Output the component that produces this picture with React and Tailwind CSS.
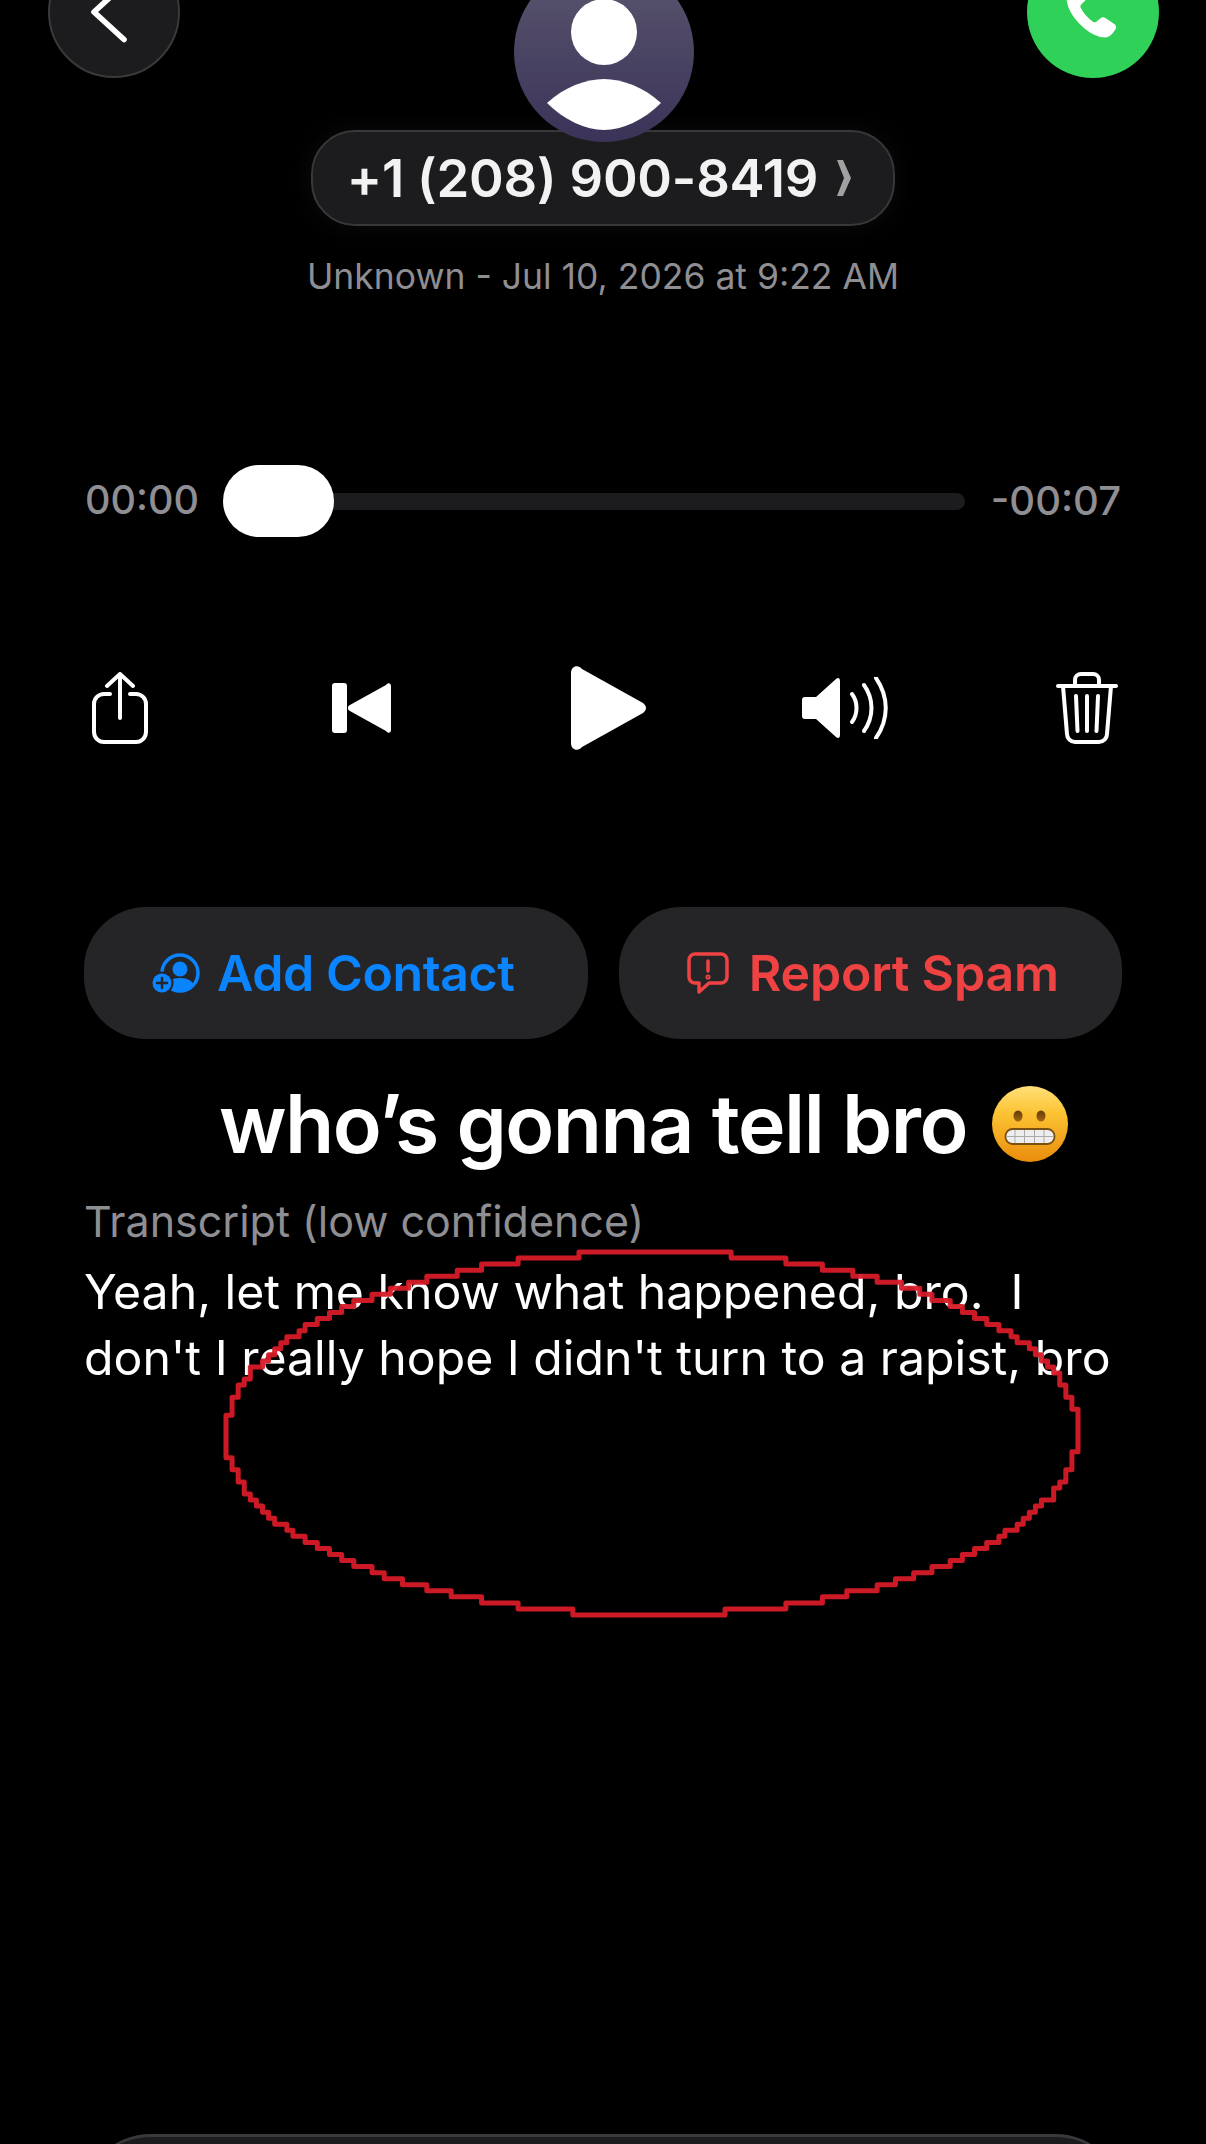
import React from "react";

const FONT = "font-['Inter','Liberation_Sans',sans-serif]";

function stairEllipse() {
  const cx = 652, cy = 1433.5 - 1240, rx = 426, ry = 181.5, gx = 426 / 70, gy = 181.5 / 30;
  const pts = [];
  for (let i = 0; i <= 720; i++) {
    const a = (i / 720) * Math.PI * 2;
    const x = cx + Math.round((rx * Math.cos(a)) / gx) * gx;
    const y = cy + Math.round((ry * Math.sin(a)) / gy) * gy;
    const last = pts[pts.length - 1];
    if (!last || last[0] !== x || last[1] !== y) pts.push([x, y]);
  }
  let d = "";
  pts.forEach((p, i) => {
    if (i === 0) d += `M${p[0]} ${p[1]}`;
    else d += `H${p[0]}V${p[1]}`;
  });
  return d + "Z";
}

function Emoji() {
  return (
    <svg viewBox="0 0 76 76" className="h-[76px] w-[76px] shrink-0">
      <defs>
        <linearGradient id="em" x1="0" y1="0" x2="0" y2="1">
          <stop offset="0%" stopColor="#ffe07a" />
          <stop offset="35%" stopColor="#fcc434" />
          <stop offset="100%" stopColor="#ea8c0c" />
        </linearGradient>
        <linearGradient id="eye" x1="0" y1="0" x2="0" y2="1">
          <stop offset="0%" stopColor="#5f3a0c" />
          <stop offset="100%" stopColor="#a4660f" />
        </linearGradient>
      </defs>
      <circle cx="38" cy="38" r="38" fill="url(#em)" />
      <ellipse cx="26" cy="30" rx="4.500" ry="5.500" fill="url(#eye)" />
      <ellipse cx="49" cy="30" rx="4.500" ry="5.500" fill="url(#eye)" />
      <rect x="13.500" y="43" width="49" height="15" rx="7" fill="#eeeeee" stroke="#7a4f12" strokeWidth="1.800" />
      <path d="M14 50.500H62M23 44V57M32.500 44V57M42.500 44V57M52 44V57" stroke="#a9a9a9" strokeWidth="1" fill="none" />
    </svg>
  );
}

export default function App() {
  return (
    <div className={`relative h-[2144px] w-[1206px] overflow-hidden bg-black ${FONT}`}>
      {/* top row */}
      <div className="flex items-start justify-between pl-[48px] pr-[47px] -mt-[54px]">
        <div className="flex h-[132px] w-[132px] items-center justify-center rounded-full border-2 border-[#3a3a3a] bg-[#1c1c1e]">
          <svg viewBox="0 0 40 60" className="h-[75px] w-[50px] translate-y-[2px] -translate-x-[5px]" fill="none" stroke="#fff" strokeWidth="4.500" strokeLinecap="round" strokeLinejoin="round">
            <path d="M32 6 L8 28 L32 50" />
          </svg>
        </div>
        <div className="relative z-10 mt-[16px] -mb-[60px] h-[180px] w-[180px] overflow-hidden rounded-full bg-gradient-to-b from-[#5b566f] to-[#3b3358]">
          <svg viewBox="0 0 180 180" className="h-[180px] w-[180px]" fill="#fff">
            <circle cx="90" cy="70" r="33" />
            <path d="M33 141 C50 125 72 117 90 117 C108 117 130 125 147 141 C130 158 108 168 90 168 C72 168 50 158 33 141Z" />
          </svg>
        </div>
        <div className="flex h-[132px] w-[132px] items-center justify-center rounded-full bg-[#30d158]">
          <svg viewBox="0 0 24 24" className="h-[66px] w-[66px] -translate-x-[3px]" fill="#fff">
            <path d="M6.600 2.200c.7-.4 1.500-.2 1.900.5l2 3.400c.3.600.2 1.300-.3 1.800L8.800 9.300c-.3.300-.4.700-.2 1.100.9 2 2.500 3.900 4.600 5.200.4.200.8.200 1.100-.1l1.500-1.200c.5-.4 1.200-.5 1.800-.1l3.200 2.200c.7.400.9 1.300.4 2-.8 1.200-1.900 2.900-3.700 2.900-5.500 0-13.900-7.800-14-14.300 0-2 1.400-3.800 3.100-4.800Z" />
          </svg>
        </div>
      </div>

      {/* number pill */}
      <div className="mt-[48px] flex justify-center">
        <div className="flex h-[96px] w-[584px] items-center justify-center gap-[18px] rounded-[44px] border-2 border-[#38383a] bg-[#1c1c1e] pr-[7px] shadow-[0_0_24px_rgba(255,255,255,0.05)]">
          <span className="text-[52.6px] font-semibold leading-none tracking-[-0.2px] text-[#f2f2f2]">+1 (208) 900-8419</span>
          <svg viewBox="0 0 16 38" className="h-[38px] w-[16px]" fill="#a1a1a1">
            <path d="M1 1 H7 L15 19 L7 37 H1 L8 19Z" />
          </svg>
        </div>
      </div>

      <p className="mt-[30px] text-center text-[35.5px] leading-[42px] text-[#8e8e93]">Unknown - Jul 10, 2026 at 9:22 AM</p>

      {/* slider */}
      <div className="mt-[167px] flex h-[72px] items-center pl-[85px] pr-[85px]">
        <span className="w-[110px] text-[39.5px] font-medium leading-none text-[#8e8e93]">00:00</span>
        <div className="relative ml-[28px] flex h-[72px] w-[742px] items-center">
          <div className="ml-[100px] h-[17px] flex-1 rounded-r-full bg-[#1c1c1e]" />
          <div className="absolute left-0 top-0 h-[72px] w-[111px] rounded-[36px] bg-white" />
        </div>
        <span className="ml-auto text-[40px] font-medium leading-none text-[#8e8e93]">-00:07</span>
      </div>

      {/* controls */}
      <div className="mt-[129px] flex h-[84px] items-center pl-[92px]">
        <svg viewBox="0 0 56 72" className="h-[72px] w-[56px]" fill="none" stroke="#fff" strokeWidth="4" strokeLinecap="round" strokeLinejoin="round">
          <path d="M18 22 H12 A10 10 0 0 0 2 32 V60 A10 10 0 0 0 12 70 H44 A10 10 0 0 0 54 60 V32 A10 10 0 0 0 44 22 H38" />
          <path d="M28 46 V2 M15 14 L28 2 L41 14" />
        </svg>
        <svg viewBox="0 0 59 50" className="ml-[184px] h-[50px] w-[59px]" fill="#fff">
          <rect x="0" y="0" width="15" height="50" rx="3" />
          <path d="M59 3 V47 C59 50 56 51 54 48 L17 27.500 C15.500 26 15.500 24 17 22.500 L54 2 C56 -1 59 0 59 3Z" />
        </svg>
        <svg viewBox="0 0 75 84" className="ml-[180px] h-[84px] w-[75px]" fill="#fff">
          <path d="M0 7 C0 0 7 -2 11 3 L72 37 C76 40 76 44 72 47 L11 81 C7 86 0 84 0 77Z" />
        </svg>
        <svg viewBox="0 0 86 62" className="ml-[156px] h-[62px] w-[86px]">
          <path d="M3 20 H14 L34 2 C36 0 38 1 38 4 V58 C38 61 36 62 34 60 L14 42 H3 C1 42 0 41 0 39 V23 C0 21 1 20 3 20Z" fill="#fff" />
          <path d="M50 17 C56 25 56 37 50 45 M62 8 C72 22 72 40 62 54 M74 1 C87 20 87 42 74 61" fill="none" stroke="#fff" strokeWidth="4" strokeLinecap="round" />
        </svg>
        <svg viewBox="0 0 62 72" className="ml-[168px] h-[72px] w-[62px]" fill="none" stroke="#fff" strokeWidth="4" strokeLinecap="round" strokeLinejoin="round">
          <path d="M2 14 H60" />
          <path d="M7 14 L11 62 A8 8 0 0 0 19 70 H43 A8 8 0 0 0 51 62 L55 14" />
          <path d="M19 14 V8 A6 6 0 0 1 25 2 H37 A6 6 0 0 1 43 8 V14" />
          <path d="M20 24 L21.500 59 M31 24 V59 M42 24 L40.500 59" />
        </svg>
      </div>

      {/* action buttons */}
      <div className="mt-[157px] flex gap-[31px] pl-[84px] pr-[84px]">
        <div className="flex h-[132px] flex-1 items-center justify-center gap-[17px] rounded-[62px] bg-[#252528] pr-[5px]">
          <svg viewBox="0 0 48 40" className="h-[40px] w-[48px]">
            <defs>
              <clipPath id="ac"><circle cx="28" cy="20" r="18" /></clipPath>
            </defs>
            <circle cx="28" cy="20" r="18" fill="none" stroke="#0a84ff" strokeWidth="3.500" />
            <circle cx="28" cy="16" r="7.500" fill="#0a84ff" />
            <path d="M12 40 C13 28 20 25 28 25 C36 25 43 28 44 40Z" fill="#0a84ff" clipPath="url(#ac)" />
            <circle cx="10" cy="30" r="11.500" fill="#252528" />
            <circle cx="10" cy="30" r="9.500" fill="#0a84ff" />
            <path d="M10 25 V35 M5 30 H15" stroke="#252528" strokeWidth="2.500" strokeLinecap="round" />
          </svg>
          <span className="text-[50px] font-semibold leading-none tracking-[-0.4px] text-[#0a84ff]">Add Contact</span>
        </div>
        <div className="flex h-[132px] flex-1 items-center justify-center gap-[20px] rounded-[62px] bg-[#252528] pl-[5px]">
          <svg viewBox="0 0 42 42" className="h-[42px] w-[42px]" fill="none" stroke="#ef4343" strokeWidth="3.500" strokeLinejoin="round" strokeLinecap="round">
            <path d="M8 2 H34 A6 6 0 0 1 40 8 V25 A6 6 0 0 1 34 31 H22 L12 40 V31 H8 A6 6 0 0 1 2 25 V8 A6 6 0 0 1 8 2Z" />
            <path d="M21 9 V19" />
            <circle cx="21" cy="25" r="0.800" fill="#ef4343" />
          </svg>
          <span className="text-[50px] font-semibold leading-none tracking-[-0.2px] text-[#ef4343]">Report Spam</span>
        </div>
      </div>

      {/* caption */}
      <div className="mt-[43px] flex h-[84px] items-center gap-[25px] pl-[219px]">
        <span className="text-[80.5px] font-semibold leading-none tracking-[-1.5px] text-white">who’s gonna tell bro</span>
        <Emoji />
      </div>

      {/* transcript */}
      <div className="mt-[30px] pl-[84px]">
        <p className="text-[43px] leading-[50px] text-[#8e8e93]">Transcript (low confidence)</p>
        <p className="mt-[13px] whitespace-nowrap text-[48.2px] leading-[66px] text-white">
          Yeah, let me know what happened, bro.&nbsp; I<br />
          don't I really hope I didn't turn to a rapist, bro
        </p>
      </div>

      {/* red hand-drawn ring */}
      <svg viewBox="0 0 1206 400" className="pointer-events-none absolute left-0 top-[1240px] h-[400px] w-[1206px] blur-[0.7px]" fill="none">
        <path d={stairEllipse()} stroke="#d71a28" strokeWidth="5" strokeLinejoin="round" opacity="0.95" />
      </svg>

      {/* bottom sheet edge */}
      <div className="absolute left-[81px] top-[2134px] h-[100px] w-[1044px] rounded-t-[70px] border-t-[3px] border-[#3a3a3c] bg-[#1c1c1e]" />
    </div>
  );
}
